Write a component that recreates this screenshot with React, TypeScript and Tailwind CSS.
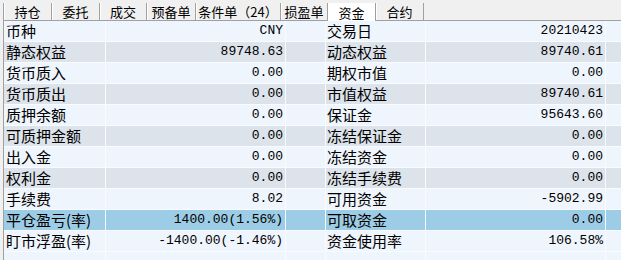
import React from "react";

const TABS: { label: string; w: string; active?: boolean }[] = [
  { label: "持仓", w: "w-[49px]" },
  { label: "委托", w: "w-[48px]" },
  { label: "成交", w: "w-[47px]" },
  { label: "预备单", w: "w-[49px]" },
  { label: "条件单（24）", w: "w-[85px]" },
  { label: "损盈单", w: "w-[47px]" },
  { label: "资金", w: "w-[48px]", active: true },
  { label: "合约", w: "w-[48px]" },
];

// [左标签, 左值, 右标签, 右值]
const ROWS: [string, string, string, string][] = [
  ["币种", "CNY", "交易日", "20210423"],
  ["静态权益", "89748.63", "动态权益", "89740.61"],
  ["货币质入", "0.00", "期权市值", "0.00"],
  ["货币质出", "0.00", "市值权益", "89740.61"],
  ["质押余额", "0.00", "保证金", "95643.60"],
  ["可质押金额", "0.00", "冻结保证金", "0.00"],
  ["出入金", "0.00", "冻结资金", "0.00"],
  ["权利金", "0.00", "冻结手续费", "0.00"],
  ["手续费", "8.02", "可用资金", "-5902.99"],
  ["平仓盈亏(率)", "1400.00(1.56%)", "可取资金", "0.00"],
  ["盯市浮盈(率)", "-1400.00(-1.46%)", "资金使用率", "106.58%"],
];

const CJK = "font-['Noto_Sans_CJK_SC','Noto_Sans',sans-serif]";
const MONO = "font-['Liberation_Mono','Noto_Sans_CJK_SC',monospace]";
const cell = "h-[21px] border-r border-b border-[#f8fbff] flex items-center overflow-hidden whitespace-nowrap";

function Row({ r, i }: { r: [string, string, string, string]; i: number }) {
  const bg = i === 9 ? "bg-[#9dcde6]" : i % 2 === 0 ? "bg-[#eff5fc]" : "bg-[#dce3ea]";
  return (
    <div className={`flex ${bg}`}>
      <div className={`${cell} w-[102px] pl-[2px] text-[15px] ${CJK}`}>{r[0]}</div>
      <div className={`${cell} w-[180px] justify-end pr-[2px] text-[13px] ${MONO}`}>{r[1]}</div>
      <div className={`${cell} w-[40px]`} />
      <div className={`${cell} w-[100px] pl-[1px] text-[15px] ${CJK}`}>{r[2]}</div>
      <div className={`${cell} w-[180px] justify-end pr-[2px] text-[13px] ${MONO}`}>{r[3]}</div>
      <div className={`${cell} flex-1 border-r-0`} />
    </div>
  );
}

export default function App() {
  return (
    <div className="w-[621px] h-[260px] overflow-hidden bg-[#f0f0f0] text-black">
      {/* 标签页 */}
      <div className="flex h-[21px] pt-[3px] pl-[3px]">
        <div className="flex flex-1 border-b border-[#a0a0a0]">
          {TABS.map((t) => (
            <div
              key={t.label}
              className={`${t.w} flex items-center justify-center text-[13px] leading-none ${CJK} ${
                t.active
                  ? "bg-white -mb-px border-r border-[#a0a0a0]"
                  : "border-r border-[#a0a0a0] shadow-[inset_1px_0_0_#ffffff]"
              } ${t.label === "持仓" ? "border-l border-l-[#a0a0a0]" : ""}`}
            >
              {t.label}
            </div>
          ))}
        </div>
      </div>

      {/* 资金表 */}
      <div className="ml-[3px] h-[239px] border-l border-[#a0a0a0] bg-[#eff5fc] overflow-hidden">
        {ROWS.map((r, i) => (
          <Row key={r[0]} r={r} i={i} />
        ))}
        <div className="flex">
          <div className={`${cell} w-[102px]`} />
          <div className={`${cell} w-[180px]`} />
          <div className={`${cell} w-[40px]`} />
          <div className={`${cell} w-[100px]`} />
          <div className={`${cell} w-[180px]`} />
          <div className={`${cell} flex-1 border-r-0`} />
        </div>
      </div>
    </div>
  );
}
